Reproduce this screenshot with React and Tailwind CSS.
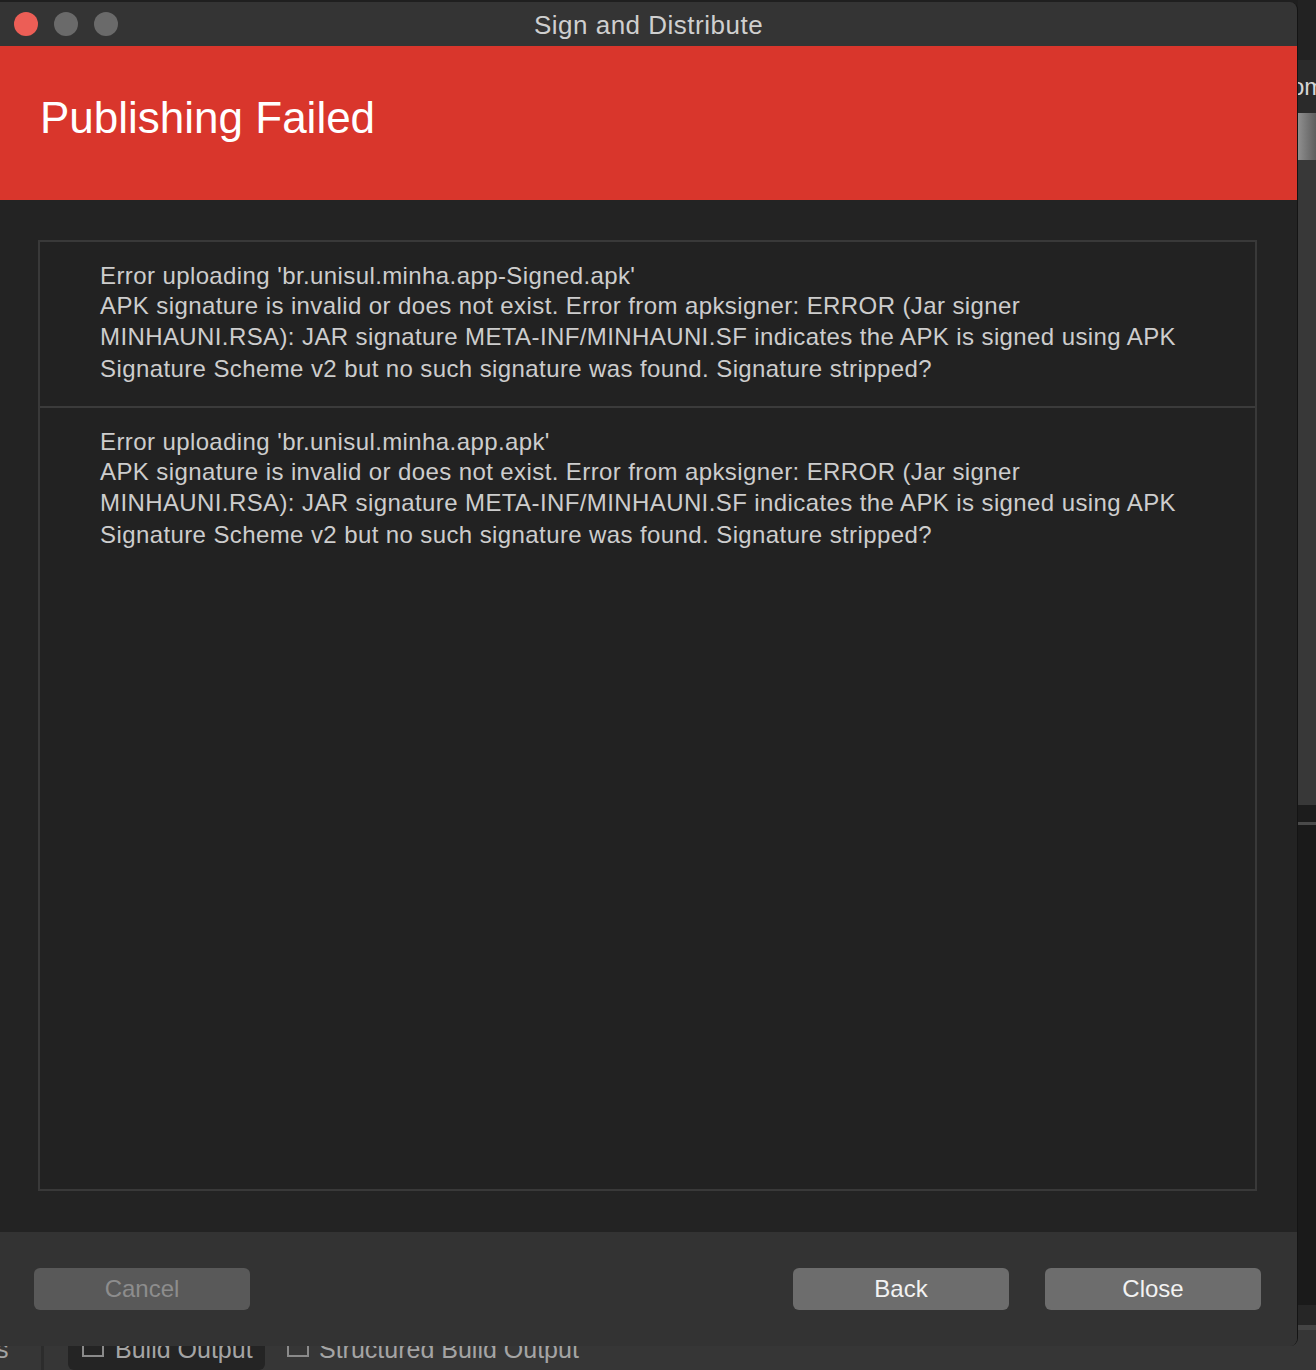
import React from 'react';

const errors = [
  {
    title: "Error uploading 'br.unisul.minha.app-Signed.apk'",
  },
  {
    title: "Error uploading 'br.unisul.minha.app.apk'",
  },
];

const detailLines = [
  'APK signature is invalid or does not exist. Error from apksigner: ERROR (Jar signer',
  'MINHAUNI.RSA): JAR signature META-INF/MINHAUNI.SF indicates the APK is signed using APK',
  'Signature Scheme v2 but no such signature was found. Signature stripped?',
];

function Checkbox() {
  return <span className="inline-block w-[22px] h-[14px] border-2 border-[#8a8a8a] border-t-0" />;
}

export default function App() {
  return (
    <div className="relative w-[1316px] h-[1370px] overflow-hidden bg-[#1f1f1f] font-['Liberation_Sans',Arial,sans-serif]">
      {/* IDE behind the dialog */}
      <div className="flex flex-col h-full">
        <div className="flex flex-1 min-h-0">
          <div className="flex-1 overflow-hidden">
            <div className="-mt-[24px] pl-[2px] text-[26px] font-bold text-[#d0d0d0] leading-[26px]">Name</div>
          </div>
          <div className="w-[18px] flex flex-col overflow-hidden">
            <div className="h-[60px] bg-[#222222]" />
            <div className="h-[53px] bg-[#2a2a2a] flex items-center">
              <span className="-ml-[7px] text-[24px] text-[#d6d6d6]">om</span>
            </div>
            <div className="h-[47px] bg-gradient-to-r from-[#8f8f8f] to-[#5e5e5e]" />
            <div className="h-[645px] bg-[#383838]" />
            <div className="h-[17px] bg-[#1c1c1c]" />
            <div className="h-[3px] bg-[#4a4a4a]" />
            <div className="h-[480px] bg-[#1a1a1a]" />
            <div className="h-[20px] bg-[#262626]" />
            <div className="flex-1 bg-[#444444]" />
          </div>
        </div>
        <div className="h-[40px] bg-[#363636] flex items-center text-[25px] text-[#a4a4a4]">
          <span className="-ml-[4px] w-[45px]">s</span>
          <span className="w-[3px] h-full bg-[#2c2c2c]" />
          <div className="ml-[24px] h-full w-[197px] bg-[#242424] rounded-b-[6px] flex items-center gap-[11px] pl-[14px]">
            <Checkbox />
            <span>Build Output</span>
          </div>
          <div className="ml-[22px] flex items-center gap-[10px]">
            <Checkbox />
            <span>Structured Build Output</span>
          </div>
        </div>
      </div>

      {/* Sign and Distribute window */}
      <div className="absolute left-0 top-[2px] w-[1298px] h-[1344px] flex flex-col overflow-hidden rounded-r-[8px] border-r border-[#141414]">
        <div className="h-[44px] shrink-0 bg-[#343434] grid grid-cols-[1fr_auto_1fr] items-center">
          <div className="flex items-center gap-[16px] pl-[14px]">
            <span className="w-[24px] h-[24px] rounded-full bg-[#ec5e56]" />
            <span className="w-[24px] h-[24px] rounded-full bg-[#6a6a6a]" />
            <span className="w-[24px] h-[24px] rounded-full bg-[#6a6a6a]" />
          </div>
          <div className="text-[26px] tracking-[0.5px] text-[#cfcfcf] pt-[3px]">Sign and Distribute</div>
          <div />
        </div>

        <div className="h-[154px] shrink-0 bg-[#d9362c] flex items-center px-[40px] pb-[10px]">
          <h1 className="text-[44px] text-white">Publishing Failed</h1>
        </div>

        <div className="flex-1 min-h-0 bg-[#232323] pl-[38px] pr-[40px] pt-[40px] pb-[41px] flex">
          <div className="flex-1 border-2 border-[#393939] bg-[#222222]">
            {errors.map((e, i) => (
              <div
                key={i}
                className={`pl-[60px] pt-[18px] text-[24px] tracking-[0.4px] leading-[31.5px] text-[#cdcdcd] ${
                  i === 0 ? 'pb-[22px] border-b-2 border-[#3b3b3b]' : 'pb-[20px]'
                }`}
              >
                <div className="whitespace-nowrap -mb-[2px]">{e.title}</div>
                {detailLines.map((l, j) => (
                  <div key={j} className="whitespace-nowrap">{l}</div>
                ))}
              </div>
            ))}
          </div>
        </div>

        <div className="h-[114px] shrink-0 bg-[#333333] flex items-center pl-[34px] pr-[36px]">
          <button className="w-[216px] h-[42px] rounded-[6px] bg-[#595959] text-[24px] text-[#8d8d8d]">Cancel</button>
          <div className="flex-1" />
          <div className="flex gap-[36px]">
            <button className="w-[216px] h-[42px] rounded-[6px] bg-[#6d6d6d] text-[24px] text-[#f2f2f2]">Back</button>
            <button className="w-[216px] h-[42px] rounded-[6px] bg-[#6d6d6d] text-[24px] text-[#f2f2f2]">Close</button>
          </div>
        </div>
      </div>
    </div>
  );
}
